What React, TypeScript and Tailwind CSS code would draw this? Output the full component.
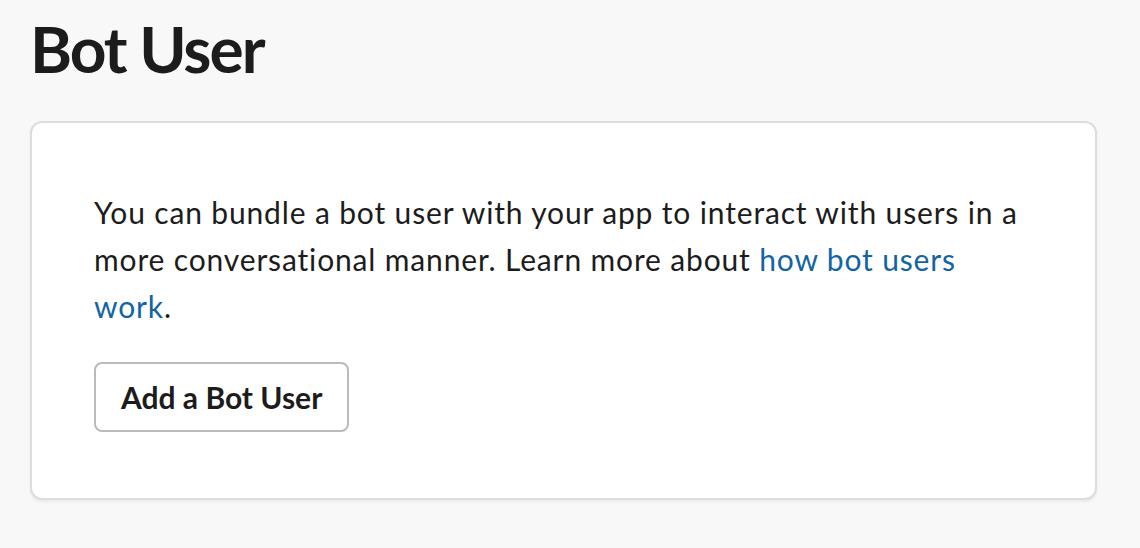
import React from 'react';

export default function App() {
  return (
    <div className="min-h-screen w-full bg-[#f8f8f8] font-['Lato','Liberation_Sans',sans-serif] text-[#1d1c1d]">
      <div className="w-[1067px] ml-[30px] pt-[13px]">
        <h1 className="text-[64px] font-bold leading-[72px] tracking-[-2px]">Bot User</h1>

        <section className="mt-[36px] bg-white border-2 border-[#dddddd] rounded-[12px] shadow-[0_2px_3px_rgba(0,0,0,0.06)] pl-[62px] pr-[60px] pt-[66px] pb-[66px]">
          <p className="w-[930px] text-[30px] leading-[47px] tracking-[0.85px]">
            You can bundle a bot user with your app to interact with users in a more conversational
            manner. Learn more about{' '}
            <a href="#" className="text-[#1264a3]">
              how bot users work
            </a>
            .
          </p>
          <button className="mt-[32px] h-[70px] px-[25px] border-2 border-[#bbbbbb] rounded-[8px] bg-white text-[30px] font-bold text-[#1d1c1d]">
            Add a Bot User
          </button>
        </section>
      </div>
    </div>
  );
}
